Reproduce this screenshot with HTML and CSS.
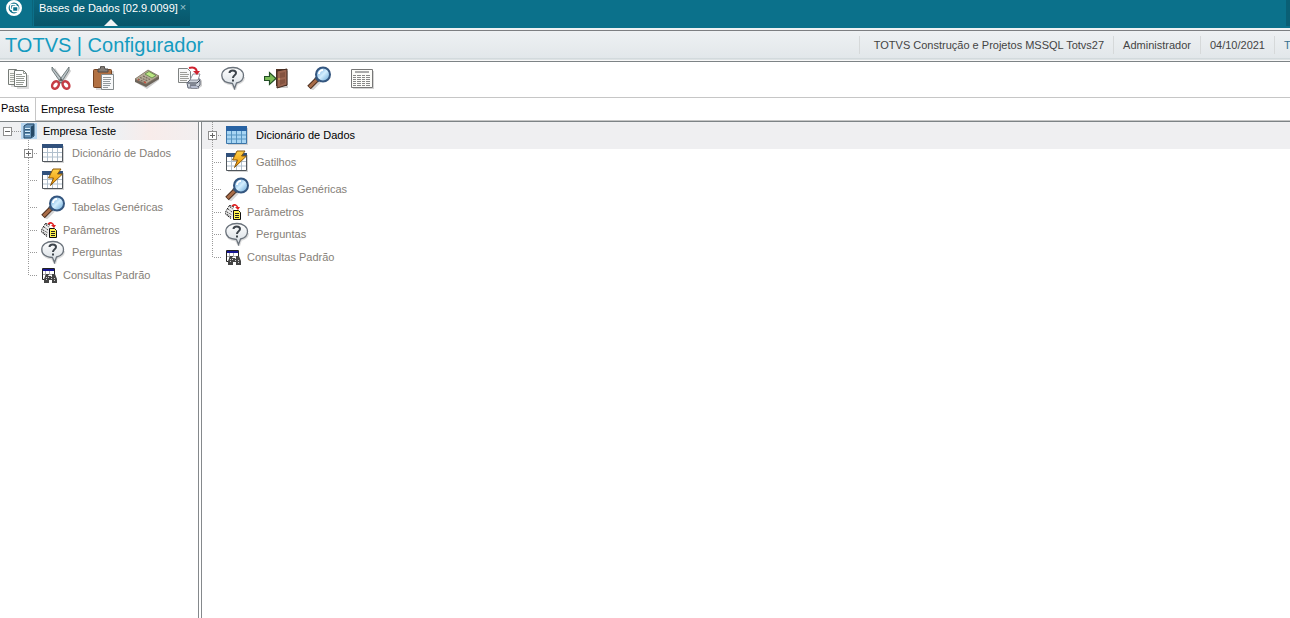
FILE: index.html
```html
<!DOCTYPE html>
<html lang="pt-BR">
    <head>
        <meta charset="utf-8">
        <title>Configurador</title>
        <link rel="stylesheet" href="styles.css">
    </head>

    <body>
        <!-- shared icons -->
        <svg class="icon-defs" width="0" height="0">
            <defs>
                <linearGradient id="lens" x1="0" y1="0" x2="1" y2="1">
                    <stop offset="0" stop-color="#4f93d0"/>
                    <stop offset="0.5" stop-color="#d4efff"/>
                    <stop offset="1" stop-color="#5d9fd2"/>
                </linearGradient>
                <linearGradient id="bolt" x1="0" y1="0" x2="0" y2="1">
                    <stop offset="0" stop-color="#ffd24a"/>
                    <stop offset="1" stop-color="#e98f00"/>
                </linearGradient>
                <linearGradient id="bubble" x1="0" y1="0" x2="0" y2="1">
                    <stop offset="0" stop-color="#ffffff"/>
                    <stop offset="1" stop-color="#d5dce2"/>
                </linearGradient>
            </defs>
            <symbol id="i-search" viewBox="0 0 24 24">
                <path d="M4 23L12 15" stroke="#d5d5d5" stroke-width="5"/>
                <path d="M2 21.500L10 13.500" stroke="#4b2d1d" stroke-width="5"/>
                <path d="M2.500 21L9.500 14" stroke="#a86c48" stroke-width="3"/>
                <path d="M8 11.500L12 15.500" stroke="#46515f" stroke-width="2"/>
                <circle cx="16" cy="8.500" r="7" fill="url(#lens)" stroke="#34567f" stroke-width="2"/>
                <path d="M12 8a4 4 0 0 1 4-4" fill="none" stroke="#fff" stroke-width="2"/>
            </symbol>
            <symbol id="i-help" viewBox="0 0 24 24">
                <path d="M12 3C5 3 1.500 6 1.500 10.500S5 18 11 18.500L14 24L16 18C20.500 17 23 14.500 23 11" fill="none" stroke="#ddd" stroke-width="2"/>
                <path d="M12 1.500C5 1.500 .8 5 .8 9.500S5 17 11.500 17.500L13.500 22.500L15.500 17C20 16 22.500 13 22.500 9.500C22.500 5 18 1.500 12 1.500Z" fill="url(#bubble)" stroke="#6a727b" stroke-width="1.300"/>
                <path d="M8.500 7C8.500 3.500 15 3.500 15 7C15 9.500 12 9 12 12" fill="none" stroke="#3d444b" stroke-width="2"/>
                <path d="M11 13.500h2v2h-2z" fill="#3d444b"/>
            </symbol>
            <symbol id="i-table" viewBox="0 0 24 24">
                <path d="M3 5h20v17H3z" fill="#d4d4d4"/>
                <path d="M1.500 3.500h20v17h-20z" fill="#fff" stroke="#50565c"/>
                <path d="M1 3h21v4H1z" fill="#31517c"/>
                <path d="M2 11.500h19M2 16h19M6.500 7v13M11.500 7v13M16.500 7v13" fill="none" stroke="#b1c0cd"/>
            </symbol>
            <symbol id="i-table-on" viewBox="0 0 24 24">
                <path d="M3 5h20v17H3z" fill="#cecece"/>
                <path d="M1.500 3.500h20v17h-20z" fill="#a8d5f3" stroke="#3b75a9"/>
                <path d="M1 3h21v5H1z" fill="#2863a4"/>
                <path d="M2 12h19M2 16h19M6.500 8v12M11.500 8v12M16.500 8v12" fill="none" stroke="#5795c2"/>
            </symbol>
            <symbol id="i-trigger" viewBox="0 0 24 24">
                <path d="M3 5h20v17H3z" fill="#d4d4d4"/>
                <path d="M1.500 3.500h20v17h-20z" fill="#fff" stroke="#50565c"/>
                <path d="M1 3h21v4H1z" fill="#31517c"/>
                <path d="M2 11.500h19M2 16h19M6.500 7v13M11.500 7v13M16.500 7v13" fill="none" stroke="#b1c0cd"/>
                <path d="M12 1h8l-3.500 5h5L9.500 17.500l3-7.500H7.500z" fill="url(#bolt)" stroke="#87570e" stroke-width="1"/>
            </symbol>
            <symbol id="i-params" viewBox="0 0 16 16">
                <path d="M4 1l5 2v9l-3 3l-6-5z" fill="#ececec"/>
                <path d="M4.500 1.500L1 7l-.5 3L6 14.500M4.500 1.500L9 3" fill="none" stroke="#111" stroke-dasharray="2 1"/>
                <path d="M3 5l4 3M5 3l3 2M2 8l5 3M2 10l4 3" stroke="#222" stroke-dasharray="1 1"/>
                <path d="M7 2q4-3 6 2" fill="none" stroke="#e02020" stroke-width="1.500"/>
                <path d="M10 3h5l-2 3z" fill="#e02020"/>
                <path d="M8.500 6.500h5l2 2v7h-7z" fill="#fff34d" stroke="#111"/>
                <path d="M10 9.500h4M10 11.500h4M10 13.500h4" stroke="#222"/>
            </symbol>
            <symbol id="i-query" viewBox="0 0 16 16">
                <path d="M1.500 1.500h12v11h-12z" fill="#fff" stroke="#222"/>
                <path d="M2 2h11v2H2z" fill="#161694"/>
                <path d="M2 7.500h11M4.500 4v8M8.500 4v4" stroke="#aaa"/>
                <path d="M5 7h3v2h3V7h3l2 5v4h-5v-3H8v3H3v-4z" fill="#444"/>
                <path d="M5.500 10v3M10.500 9v3M13.500 11v3M7.500 8v3" stroke="#d0d0d0" stroke-dasharray="1 1"/>
            </symbol>
            <symbol id="i-server" viewBox="0 0 16 16">
                <path d="M0 0h16v16H0z" fill="#b6d6f1"/>
                <path d="M3 3l3-2h7v12l-3 2H3z" fill="#6793b8" stroke="#244866"/>
                <path d="M10 3.500v11L13 12V2z" fill="#244866"/>
                <path d="M4 5.500h5M4 8.500h5M4 11.500h5" stroke="#d5edfb"/>
                <path d="M4 6.500h5M4 9.500h5" stroke="#315b7c"/>
            </symbol>
        </svg>

        <div class="topbar">
            <button class="logo" aria-label="Menu">
                <svg width="18" height="18" viewBox="0 0 18 18">
                    <circle cx="9" cy="8" r="6.700" fill="none" stroke="#fff" stroke-width="2.600"/>
                    <rect x="5.500" y="4.500" width="5.500" height="5" rx="1" fill="none" stroke="#fff" stroke-width="1.400"/>
                    <rect x="7.500" y="6.500" width="5.500" height="5" rx="1" fill="#0b718b" stroke="#fff" stroke-width="1.400"/>
                </svg>
            </button>
            <div class="tab">
                <button class="tab-title">Bases de Dados [02.9.0099]</button>
                <button class="tab-close" aria-label="Fechar">×</button>
            </div>
            <div class="topbar-end"></div>
        </div>

        <div class="header">
            <h1>TOTVS | Configurador</h1>
            <div class="info">
                <span class="company">TOTVS Construção e Projetos MSSQL Totvs27</span>
                <span>Administrador</span>
                <span>04/10/2021</span>
                <span class="last">T</span>
            </div>
        </div>

        <div class="toolbar">
            <button aria-label="Copiar">
                <svg viewBox="0 0 24 24">
                    <path d="M5 6h11v15H5zM11 9h12v14H11z" fill="#ddd"/>
                    <path d="M2.500 3.500h8l3 3v12h-11z" fill="#f8f8f5" stroke="#777c78"/>
                    <path d="M4 7.500h6M4 9.500h7M4 11.500h6M4 13.500h5M4 15.500h5" stroke="#a2a69f"/>
                    <path d="M8.500 4.500h9l3 3v13h-12z" fill="#fff" stroke="#777c78"/>
                    <path d="M17.500 4.500v3h3M10 8.500h6M10 10.500h9M10 12.500h8M10 14.500h9M10 16.500h8M10 18.500h7" fill="none" stroke="#969b94"/>
                </svg>
            </button>
            <button aria-label="Recortar">
                <svg viewBox="0 0 24 24">
                    <path d="M5 3l10 15M21 4l-9 14" stroke="#d0d0d0" stroke-width="3"/>
                    <path d="M3 1l12 15l-3 1L3 4zM20 1L9 16l3 1l8-13z" fill="#bcc5c9" stroke="#596466" stroke-width=".8"/>
                    <ellipse cx="6.500" cy="19" rx="3" ry="4" transform="rotate(35 6.500 19)" fill="#fff" stroke="#c63d45" stroke-width="2.500"/>
                    <ellipse cx="17" cy="19" rx="3" ry="4" transform="rotate(-35 17 19)" fill="#fff" stroke="#c63d45" stroke-width="2.500"/>
                    <circle cx="12" cy="14" r="1" fill="#444"/>
                </svg>
            </button>
            <button aria-label="Colar">
                <svg viewBox="0 0 24 24">
                    <path d="M4 5h18v19H4z" fill="#d8d8d8"/>
                    <rect x="1.500" y="3.500" width="18" height="18" rx="1" fill="#b27143" stroke="#744222"/>
                    <path d="M6 5V3h2l1-3h3l1 3h3v3H6z" fill="#817b75" stroke="#4e4945"/>
                    <path d="M9.500 8.500h12v15h-12z" fill="#f8f9fa" stroke="#858b8c"/>
                    <path d="M11 11.500h8M11 13.500h8M11 15.500h7M11 17.500h8M11 19.500h7M11 21.500h5" stroke="#949b9e"/>
                </svg>
            </button>
            <button aria-label="Calculadora">
                <svg viewBox="0 0 24 24">
                    <path d="M2 17l10 6l12-9v-3L12 19z" fill="#cecece"/>
                    <path d="M0 13L13 4l11 6v3L11 21L0 16z" fill="#6d655b"/>
                    <path d="M0 13L13 4l11 6l-13 8z" fill="#b5aa97" stroke="#817564" stroke-width=".7"/>
                    <path d="M10 8L14 5.500l7 4l-4 2.500z" fill="#bce784" stroke="#5c8445" stroke-width=".8"/>
                    <path d="M3 13l8 3.500M5 11.500l8 3.500M8 10l7 3.500" stroke="#756a5e" stroke-width="1.200" stroke-dasharray="2 1"/>
                    <path d="M3 13.500l1 .5M9 16l2 .7" stroke="#c65342" stroke-width="1.500"/>
                </svg>
            </button>
            <button aria-label="Imprimir">
                <svg viewBox="0 0 24 24">
                    <path d="M.5 2.500h9l3 3v11H.5z" fill="#f7f7f7" stroke="#7f8382"/>
                    <path d="M2 6.500h7M2 8.500h9M2 10.500h8M2 12.500h9M2 14.500h7" stroke="#9d9d99"/>
                    <path d="M10 22l10 1l4-3v-6z" fill="#ccc"/>
                    <path d="M9 17l4-4h9v6l-3 3h-9z" fill="#cbd1da" stroke="#5c6373"/>
                    <path d="M12 14l3-6h7l-2 6z" fill="#fff" stroke="#757985" stroke-width=".8"/>
                    <path d="M10 17h9l3-3M12 19h6" fill="none" stroke="#393e4c"/>
                    <path d="M12 20h7l2 2h-8z" fill="#e3ecff" stroke="#6d7280" stroke-width=".8"/>
                    <path d="M11 2q7-2 8 4" fill="none" stroke="#cf2330" stroke-width="2"/>
                    <path d="M15 5h7l-3 4z" fill="#cf2330"/>
                </svg>
            </button>
            <button aria-label="Ajuda"><svg><use href="#i-help"/></svg></button>
            <button aria-label="Sair">
                <svg viewBox="0 0 24 24">
                    <path d="M14 5h11v17H14z" fill="#ccc"/>
                    <path d="M12 3h11v17H12z" fill="#533426"/>
                    <path d="M13 5l10-2v16l-10 3z" fill="#9b6550" stroke="#432a20"/>
                    <path d="M16 7l5-1v5l-5 1zM16 14l5-1v4l-5 2z" fill="#845340"/>
                    <path d="M15 12v2" stroke="#edc45c"/>
                    <path d="M.5 10.500h5v-4l6.500 6l-6.500 6v-4h-5z" fill="#7dbd59" stroke="#234f26" stroke-width="1.200"/>
                </svg>
            </button>
            <button aria-label="Pesquisar"><svg><use href="#i-search"/></svg></button>
            <button aria-label="Relatório">
                <svg viewBox="0 0 24 24">
                    <path d="M3 5h21v18H3z" fill="#d4d4d4"/>
                    <path d="M1.500 3.500h21v18h-21z" fill="#fcfcf9" stroke="#777"/>
                    <path d="M5 5h14v2H5z" fill="#aaa"/>
                    <path d="M3 9.500h17M3 11.500h17M3 13.500h17M3 15.500h17M3 17.500h17M3 19.500h17" stroke="#888" stroke-dasharray="3 1 4 1"/>
                </svg>
            </button>
        </div>

        <div class="path">
            <label for="pasta">Pasta</label>
            <input type="text" id="pasta" value="Empresa Teste">
        </div>

        <div class="main">
            <div class="side">
                <div class="row root">
                    <button class="expander minus" aria-label="Recolher"></button>
                    <span class="dots"></span>
                    <svg class="small"><use href="#i-server"/></svg>
                    <span>Empresa Teste</span>
                </div>
                <ul class="tree">
                    <li class="row big"><span class="branch"><button class="expander" aria-label="Expandir"></button></span><svg><use href="#i-table"/></svg><span>Dicionário de Dados</span></li>
                    <li class="row big"><span class="branch"></span><svg><use href="#i-trigger"/></svg><span>Gatilhos</span></li>
                    <li class="row big"><span class="branch"></span><svg><use href="#i-search"/></svg><span>Tabelas Genéricas</span></li>
                    <li class="row"><span class="branch"></span><svg class="small"><use href="#i-params"/></svg><span>Parâmetros</span></li>
                    <li class="row big"><span class="branch"></span><svg><use href="#i-help"/></svg><span>Perguntas</span></li>
                    <li class="row"><span class="branch"></span><svg class="small"><use href="#i-query"/></svg><span>Consultas Padrão</span></li>
                </ul>
            </div>
            <div class="splitter"></div>
            <div class="content">
                <ul class="tree">
                    <li class="row big selected"><span class="branch"><button class="expander" aria-label="Expandir"></button></span><svg><use href="#i-table-on"/></svg><span>Dicionário de Dados</span></li>
                    <li class="row big"><span class="branch"></span><svg><use href="#i-trigger"/></svg><span>Gatilhos</span></li>
                    <li class="row big"><span class="branch"></span><svg><use href="#i-search"/></svg><span>Tabelas Genéricas</span></li>
                    <li class="row"><span class="branch"></span><svg class="small"><use href="#i-params"/></svg><span>Parâmetros</span></li>
                    <li class="row big"><span class="branch"></span><svg><use href="#i-help"/></svg><span>Perguntas</span></li>
                    <li class="row"><span class="branch"></span><svg class="small"><use href="#i-query"/></svg><span>Consultas Padrão</span></li>
                </ul>
            </div>
        </div>
    </body>
</html>
```

FILE: styles.css
```css
* {
    box-sizing: border-box;
}

body {
    font-family: "Liberation Sans", Arial, sans-serif;
    font-size: 11px;
    line-height: 14px;
    background-color: #fff;
    color: #000;
    margin: 0;
    min-height: 100vh;
    display: flex;
    flex-direction: column;
}

button {
    font: inherit;
    color: inherit;
    background: none;
    border: none;
    padding: 0;
    cursor: pointer;
}

.icon-defs {
    position: absolute;
}

/* top bar */
.topbar {
    display: flex;
    height: 28px;
    padding-bottom: 2px;
    background-color: #0b718b;
}

.logo {
    width: 33px;
    padding: 0 0 8px 5px;
    text-align: left;
    border-right: 1px solid #0a647b;
}

.logo svg {
    display: block;
}

.tab {
    display: flex;
    align-items: flex-start;
    gap: 2px;
    padding: 1px 4px 0 5px;
    margin-left: 1px;
    color: #fff;
    background: linear-gradient(#0a667d, #08566a);
    position: relative;
}

.tab::after {
    content: "";
    position: absolute;
    bottom: 0;
    left: 50%;
    margin-left: -8px;
    border: 7px solid transparent;
    border-top: none;
    border-bottom-color: #f0f3f5;
}

.tab-close {
    color: #9cc4ce;
    line-height: 12px;
}

.topbar-end {
    width: 4px;
    margin-left: auto;
    background-color: #0a5f75;
}

/* title and session info */
.header {
    display: flex;
    align-items: center;
    height: 34px;
    padding-bottom: 2px;
    border-top: 2px solid #f0f2f3;
    border-bottom: 1px solid #7d8386;
    background: linear-gradient(#7d7f82 1px, #eef1f3 1px, #e2e7ea 28px, #c3cdd0 29px, #f8f8f8 30px);
}

h1 {
    margin: 0 0 0 5px;
    font-size: 20px;
    line-height: 24px;
    font-weight: normal;
    color: #149bc0;
}

.info {
    display: flex;
    margin-left: auto;
    color: #444;
}

.info span {
    padding: 2px 9px;
    border-left: 1px solid #d6d9da;
}

.info .company {
    padding-left: 14px;
}

.info .last {
    padding-right: 0;
    width: 16px;
    overflow: hidden;
    color: #36708f;
}

/* toolbar */
.toolbar {
    display: flex;
    align-items: center;
    gap: 19px;
    height: 35px;
    padding: 0 0 3px 6px;
}

.toolbar svg {
    display: block;
    width: 24px;
    height: 24px;
}

.path {
    display: flex;
    height: 25px;
    border-top: 1px solid #c6c6c6;
    border-bottom: 1px solid #7d8386;
}

.path label {
    width: 35px;
    padding: 3px 0 0 1px;
}

.path input {
    flex: 1;
    min-width: 0;
    font: inherit;
    padding: 0 5px;
    border: 1px solid #c6c6c6;
    border-width: 0 0 1px 1px;
    outline: none;
}

/* trees */
.main {
    display: flex;
    flex: 1;
}

.side {
    width: 198px;
}

.splitter {
    width: 4px;
    border: 1px solid #85898c;
    border-width: 0 1px;
    cursor: col-resize;
}

.content {
    flex: 1;
}

.tree {
    list-style: none;
    margin: 0;
    padding: 0;
    color: #858078;
}

.side .tree {
    padding-left: 24px;
}

.row {
    display: flex;
    align-items: center;
    height: 18px;
}

.row.big {
    height: 27px;
    padding-bottom: 1px;
}

.row svg {
    width: 24px;
    height: 24px;
    margin-right: 7px;
}

.row svg.small {
    width: 16px;
    height: 16px;
    margin-right: 6px;
}

.root {
    padding-left: 3px;
    background: linear-gradient(90deg, #eff0f2 120px, #f8ecea 150px, #f2eff0);
}

.content .row {
    padding-left: 6px;
}

.selected {
    color: #000;
    background-color: #efeff1;
}

.dots {
    width: 9px;
    height: 1px;
    background: repeating-linear-gradient(90deg, #999 0 1px, transparent 1px 2px);
}

.branch {
    display: flex;
    align-items: center;
    width: 17px;
    height: 100%;
    background:
        repeating-linear-gradient(90deg, transparent 0 1px, #999 1px 2px) left 5px center / 9px 1px no-repeat,
        repeating-linear-gradient(#999 0 1px, transparent 1px 2px) 4px 0 / 1px 100% no-repeat;
}

/* the last item closes the branch at half height */
.row:last-child .branch {
    background-size: 9px 1px, 1px 50%;
}

.expander {
    width: 9px;
    height: 9px;
    border: 1px solid #8e8e8e;
    background:
        linear-gradient(#666, #666) center / 5px 1px no-repeat,
        linear-gradient(#666, #666) center / 1px 5px no-repeat,
        #fff;
}

.expander.minus {
    background: linear-gradient(#666, #666) center / 5px 1px no-repeat, #fff;
}
```
